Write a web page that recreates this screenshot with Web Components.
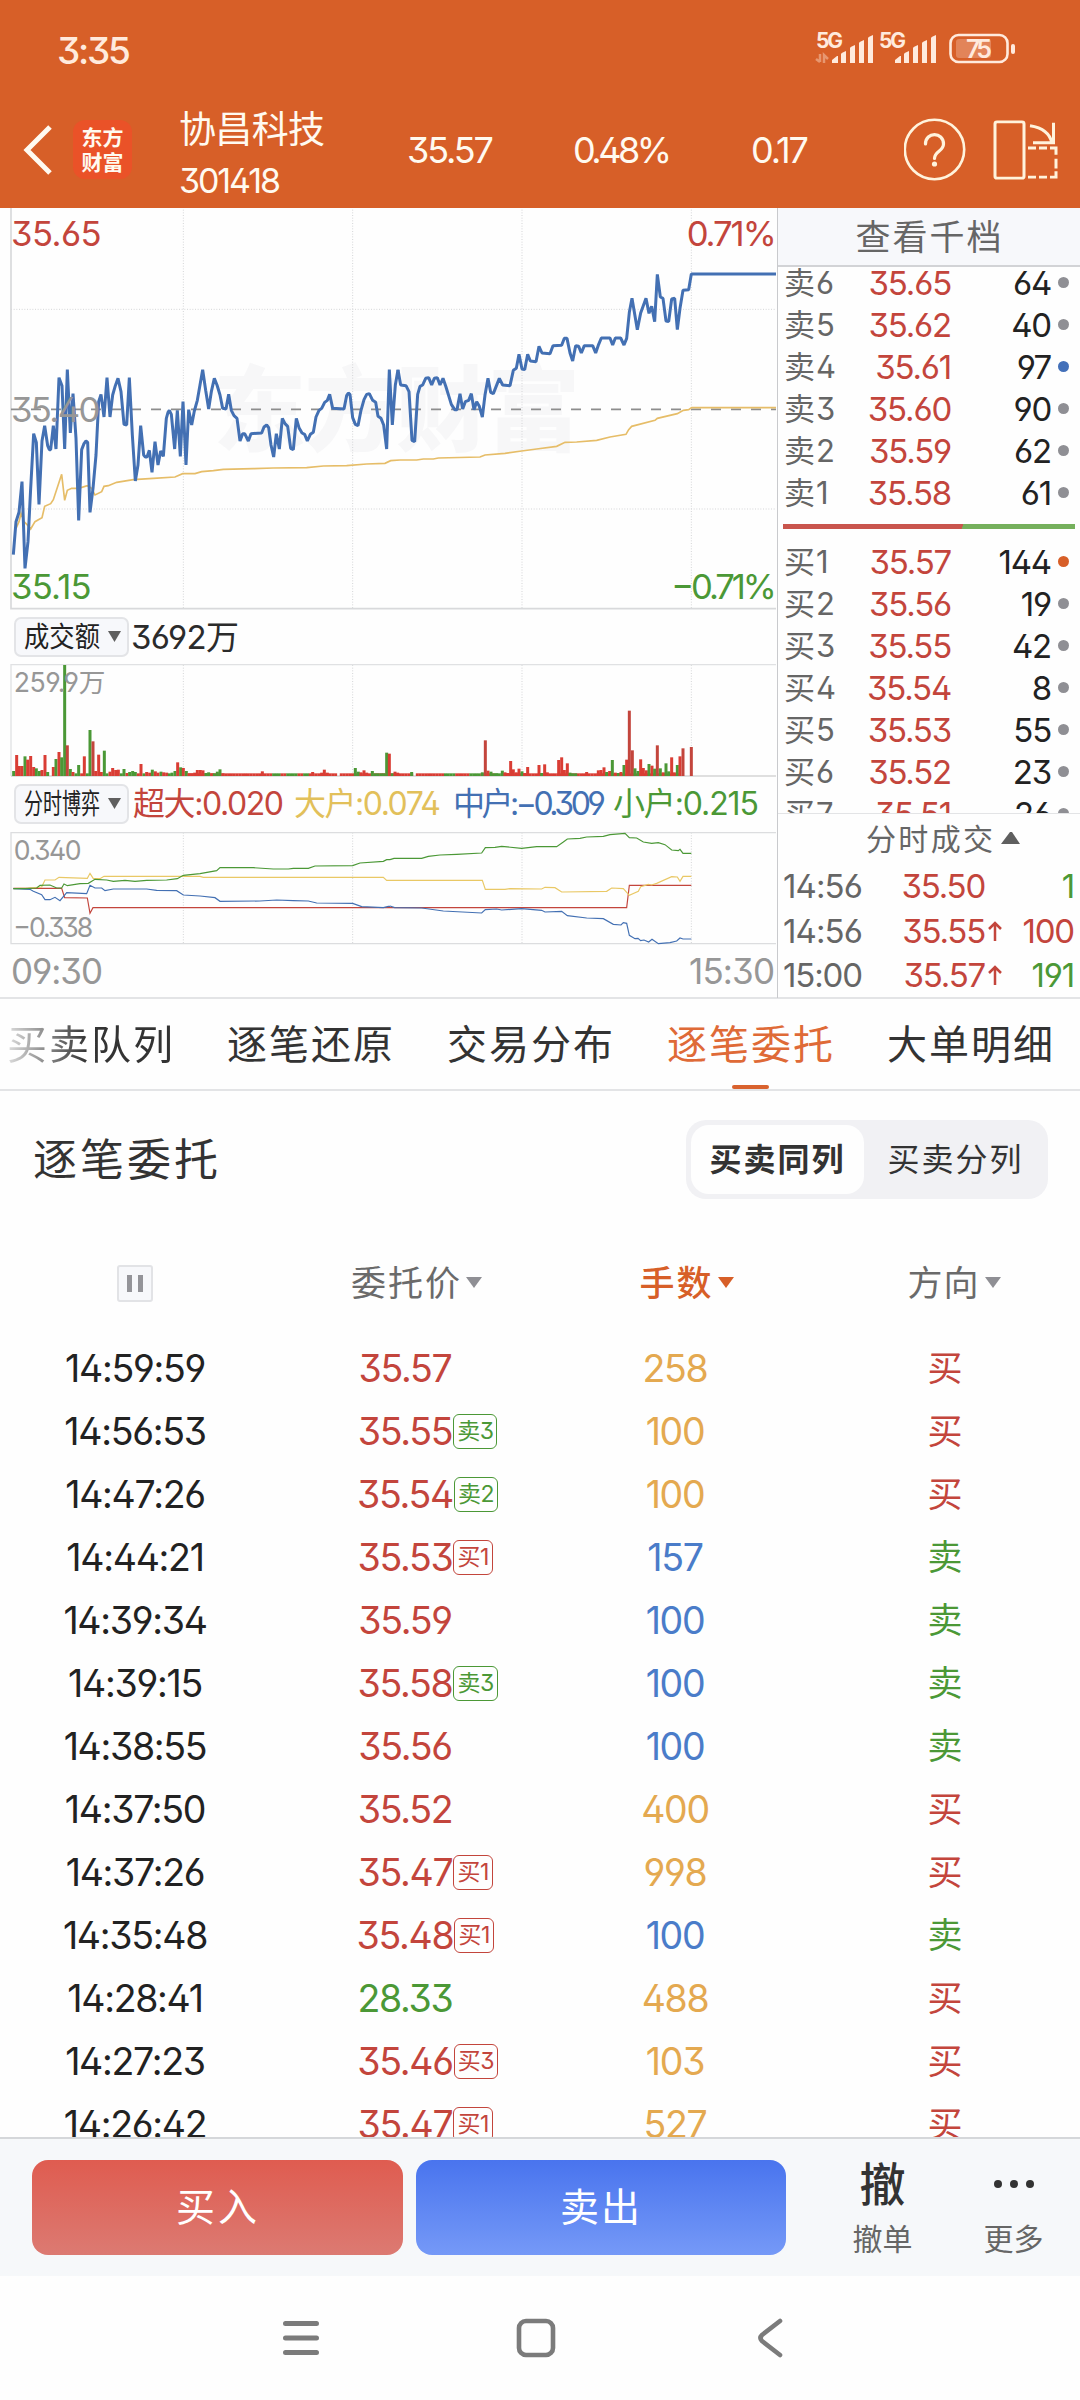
<!DOCTYPE html>
<html lang="zh-CN">
<head>
<meta charset="utf-8">
<title>协昌科技 301418</title>
<style>
    html, body { margin: 0; padding: 0; }

    body {
        width: 1080px;
        height: 2400px;
        overflow: hidden;
        background: #fefefe;
        color: #222;
        font-family: Inter, "Noto Sans CJK SC", sans-serif;
        font-feature-settings: "cv09", "ss01";
        --red: #c3453c;
        --green: #4b9836;
        --blue: #4370b3;
        --orange: #d75f28;
        --line: #e3e4e6;
    }
</style>
</head>
<body>
<trade-app></trade-app>

<script>
// Tracks its text in or out so that it fills the given width
class FitText extends HTMLElement {
    constructor() {
        super();
        this.attachShadow({ mode: 'open' });
        this.shadowRoot.innerHTML = `
        <style>
            :host { display: inline-block; white-space: nowrap; }
            span { display: inline-block; letter-spacing: 0; }
        </style>
        <span><slot></slot></span>`;
    }

    connectedCallback() {
        const span = this.shadowRoot.querySelector('span');
        const count = this.textContent.length;
        const natural = span.getBoundingClientRect().width;
        const width = Number(this.getAttribute('w'));
        const gap = (width - natural) / (count - 1);
        span.style.letterSpacing = gap + 'px';
        span.style.marginRight = -gap + 'px';
    }
}

class StatusBar extends HTMLElement {
    constructor() {
        super();
        this.attachShadow({ mode: 'open' });
        const bars = `
            <path d="M17 31V28l5-4h1v7zM26 31V22q0-1 5-3v12zM35 31V16q0-1 5-3v18zM44 31V11q0-1 5-3v23zM53 31V6q0-1 5-3v28z"/>`;
        this.shadowRoot.innerHTML = `
        <style>
            :host {
                display: flex;
                justify-content: space-between;
                align-items: center;
                height: 100px;
                padding: 0 63px 0 57px;
                box-sizing: border-box;
                color: #ffeadd;
                font-size: 37px;
                font-weight: 500;
            }
            svg { display: block; overflow: visible; }
            text { font-family: Inter, sans-serif; }
        </style>
        <fit-text w="74">3:35</fit-text>
        <svg width="202" height="36" viewBox="0 0 202 36" fill="#ffeadd">
            <text x="1" y="16" font-size="21" font-weight="700" textLength="27">5G</text>
            <path d="M5 22v8M5 30l-4-3M9 31v-8l4 4" stroke="#ffeadd" stroke-width="2.5" fill="none" opacity=".4"/>
            ${bars}
            <text x="64" y="16" font-size="21" font-weight="700" textLength="27">5G</text>
            <g transform="translate(63 0)">${bars}</g>
            <rect x="135.500" y="3" width="57" height="27" rx="8" fill="none" stroke="#ffeadd" stroke-width="2.600"/>
            <rect x="141" y="7" width="35" height="19" rx="3" opacity=".27"/>
            <rect x="196" y="12" width="4" height="10" rx="2"/>
            <text x="151" y="25.500" font-size="25" font-weight="600" textLength="26">75</text>
        </svg>`;
    }
}

class StockHeader extends HTMLElement {
    constructor() {
        super();
        this.attachShadow({ mode: 'open' });
        this.shadowRoot.innerHTML = `
        <style>
            :host {
                display: grid;
                grid-template-columns: 73px 106px 228px 166px 178px 153px 1fr;
                grid-template-rows: 99px;
                align-items: center;
                height: 108px;
                color: #fffaf0;
                font-size: 36px;
                line-height: 44px;
            }
            .back { margin-left: 22px; }
            .logo {
                width: 59px;
                height: 59px;
                border-radius: 12px;
                background: #ea5228;
                text-align: center;
                font: 700 21px/25px "Noto Sans CJK SC", sans-serif;
                padding-top: 4px;
                box-sizing: border-box;
            }
            .name { padding-top: 11px; font-size: 37px; line-height: 50px; }
            .name > * { display: block; }
            .name .code { font-size: 34px; line-height: 51px; }
            svg { display: block; }
            .icons { display: flex; gap: 26px; }
        </style>
        <svg class="back" width="32" height="54" viewBox="0 0 32 54" fill="none" stroke="#fffaf0" stroke-width="5"><path d="M28 4L5 27l23 23"/></svg>
        <div class="logo">东方<br>财富</div>
        <div class="name"><fit-text w="146">协昌科技</fit-text><fit-text class="code" w="102">301418</fit-text></div>
        <fit-text w="87">35.57</fit-text>
        <fit-text w="99">0.48%</fit-text>
        <fit-text w="58">0.17</fit-text>
        <div class="icons">
            <svg width="62" height="64" viewBox="0 0 62 64" fill="none" stroke="#fff3dc" stroke-width="2.600">
                <circle cx="30.500" cy="31.500" r="29.700"/>
                <path d="M21.500 26c0-12.500 18-12.500 18 0 0 7.500-9 7-9 14.500" stroke-width="3.200" stroke-linecap="round"/>
                <circle cx="30.500" cy="46" r="2.600" fill="#fff3dc" stroke="none"/>
            </svg>
            <svg width="66" height="64" viewBox="0 0 66 66" preserveAspectRatio="none" fill="none" stroke="#fff3dc" stroke-width="3">
                <rect x="3" y="4" width="29" height="58" rx="2"/>
                <path d="M38 8q19 3 22 18M61.500 5v20.500H41"/>
                <path d="M36 31h8M47 31h8M58 31h6v7M64 42v10M64 55v6h-6M55 61h-8M44 61h-8"/>
            </svg>
        </div>`;
    }
}

const UP = '#c3453c';
const DOWN = '#4b9836';

// Charts are plotted at three units to the pixel
class PriceChart extends HTMLElement {
    constructor() {
        super();
        this.attachShadow({ mode: 'open' });
        this.shadowRoot.innerHTML = `
        <style>
            :host { display: block; }
            svg { display: block; overflow: visible; }
            text { font-family: Inter, "Noto Sans CJK SC", sans-serif; font-size: 104px; }
            .mark { font-family: "Noto Sans CJK SC", sans-serif; font-size: 278px; font-weight: 900; fill: #f7f7f8; }
        </style>
        <svg width="777" height="405" viewBox="0 9 2331 1215" fill="none">
            <text class="mark" x="640" y="716" textLength="1100">东方财富</text>
            <path d="M33 313H2328M33 912H2328M550 14V1211M1058 14V1211M1566 14V1211M2074 14V1211" stroke="#d4d5d7" stroke-width="3" stroke-dasharray="3 5"/>
            <path d="M33 9V1211H2328" stroke="#d8d9db" stroke-width="5"/>
            <path d="M33 613H2328" stroke="#8d8d8d" stroke-width="5" stroke-dasharray="30 30"/>
            <g stroke="#e6bd68" stroke-width="5">
                <polyline points="48,970 57,950 63,925 72,950 84,962 92,972 105,950 126,938 134,904 152,896 160,884 185,808 194,886 202,856 215,850 236,850 262,842 275,850 285,870 305,860 312,844 325,842 350,832 400,824 460,820 525,816 548,806 585,806 605,800 640,797 670,793 760,791 820,789 920,788 970,783 1040,782 1100,777 1155,775 1172,767 1200,765"/>
                <polyline transform="translate(1170 0)" points="30,765 80,765 100,762 130,762 145,759 270,756 285,750 345,745 395,738 440,732 500,724 525,712 560,711 620,706 660,696 708,688 716,674 725,664 795,646 802,640 862,626 880,616 896,614 905,608 1158,608"/>
            </g>
            <g stroke="#4370b3" stroke-width="9" stroke-linejoin="bevel">
                <polyline points="40,1049 48,950 57,922 66,830 75,1090 84,1010 92,850 101,686 109,712 117,898 126,708 134,662 143,722 148,734 152,734 160,662 168,732 177,518 186,542 194,732 202,494 211,684 219,566 228,700 236,946 245,734 252,716 258,708 263,712 270,922 279,850 288,750 296,590 303,568 312,636 321,518 330,636 338,570 346,542 354,520 363,560 372,658 380,660 388,518 397,690 406,828 414,780 422,662 431,750 436,756 441,756 448,736 456,802 465,710 474,780 482,738 490,754 499,640 504,622 508,616 514,628 524,732 532,616 541,754 549,590 558,780 566,614 575,660 583,618 592,586 600,540 608,494 617,556 626,612 634,560 643,520 651,540 660,570 668,610 678,612 686,568 694,616 702,632 711,640 720,708 728,686 734,686 745,708 753,686 785,684 792,666 800,660 806,668 813,720 821,756 829,686 838,732 847,640 855,656 863,664 872,730 880,734 889,640 897,668 906,684 914,688 922,708 931,688 940,682 948,636 957,616 965,610 974,592 982,586 989,568 998,610 1032,612 1040,572 1045,564 1050,568 1058,638 1066,658 1074,662 1083,616 1092,584 1100,568 1108,566 1118,586 1127,592 1134,634 1143,640 1151,660 1160,732 1168,494 1177,660 1186,540 1194,494"/>
                <polyline transform="translate(1170 0)" points="24,494 32,540 48,542 57,560 66,706 74,710 83,568 90,544 98,540 107,520 116,518 125,540 133,520 142,518 150,540 159,520 168,546 176,572 184,598 194,614 201,614 210,566 218,612 226,590 236,586 244,566 252,614 260,590 268,604 277,636 285,570 294,520 302,562 310,566 328,520 338,540 360,542 370,496 379,490 387,448 396,492 404,494 413,448 421,468 438,470 447,424 456,444 480,446 489,422 515,421 523,400 531,400 540,444 548,468 557,422 566,424 574,444 583,422 608,422 617,444 626,418 634,399 660,399 668,420 676,399 692,399 702,420 710,400 718,322 726,280 742,374 752,324 768,280 777,325 785,304 794,350 802,208 811,276 819,280 828,348 836,350 845,282 854,280 862,374 870,310 879,256 896,254 904,207 1158,207"/>
            </g>
            <text x="33" y="123" fill="${UP}" textLength="272">35.65</text>
            <text x="33" y="651" fill="#979797" textLength="268">35.40</text>
            <text x="33" y="1182" fill="${DOWN}" textLength="242">35.15</text>
            <text x="2060" y="123" fill="${UP}" textLength="270">0.71%</text>
            <text x="2014" y="1182" fill="${DOWN}" textLength="316">−0.71%</text>
        </svg>`;
    }
}

const VOLUME = `41:498g 50:450r 58:483r 66:483r 75:454g 83:464r 92:453r 101:486r 109:490g 118:498g 126:495r 135:450r 143:501g
160:486r 168:462g 177:441r 185:457g 194:180g 202:421r 211:492g 219:501r 228:505g 236:480g 245:505r 253:454r 262:505g 270:375g
279:409r 287:498r 296:449r 304:501r 313:437g 321:505g 330:500r 338:489r 347:495r 355:494r 364:505g 372:492g 381:504r 389:501g
398:498g 406:501g 415:505r 423:477r 432:505g 440:501r 449:503r 457:494g 466:499r 474:503r 483:500g 491:502r 500:503r 508:505g
516:503g 525:498g 533:472r 542:487g 550:489r 559:498g 567:505r 575:505r 584:503r 592:495r 601:495r 609:496r 618:504g 626:502g
635:505r 643:505g 652:500g 660:493g 669:505r 787:499r 938:501r 965:503r 973:494r 982:503r 1066:489g 1075:500g 1083:502r 1092:496r
1100:503r 1117:498g 1126:505g 1134:505g 1143:505g 1151:505g 1160:443g 1168:446r 1177:505g 1185:500r 1193:503r 1235:501g
1447:502g 1456:406r 1464:497r 1473:500g 1481:505g 1490:505g 1507:497g 1515:502r 1523:504r 1532:468r 1540:493r 1549:502r 1557:491r
1566:499g 1574:504r 1583:486r 1617:480r 1625:504g 1634:478r 1642:502r 1676:465r 1685:457r 1693:495r 1702:475r 1710:503g
1718:505g 1727:505g 1760:501r 1795:496r 1803:495r 1812:487r 1820:501g 1829:498r 1837:465g 1846:503r 1855:504g 1863:501r 1872:480g
1880:464r 1888:317r 1897:436r 1905:490g 1914:498g 1922:463r 1930:489r 1939:496r 1947:477g 1956:482r 1964:491g 1972:421r
1981:490g 1990:502r 1998:475g 2006:499g 2015:457r 2023:502r 2032:480g 2040:454r 2049:430r 2074:426r`;

class VolumeChart extends HTMLElement {
    constructor() {
        super();
        this.attachShadow({ mode: 'open' });
        let bars = '';
        // quiet minutes along the baseline
        for (let x = 567; x < 2040; x += 8.45) {
            if (Math.abs(x - 1014) < 5 || Math.abs(x - 1242) < 5) continue;
            const down = (x > 810 && x < 925 && x % 3 < 2) || (x > 1330 && x < 1365) || (x > 1410 && x < 1445) || (x > 1480 && x < 1505);
            bars += `<rect x="${x - 4}" y="505" width="9" height="8" fill="${down ? DOWN : '#d93d34'}"/>`;
        }
        for (const item of VOLUME.split(/\s+/)) {
            const [x, rest] = item.split(':');
            const top = parseInt(rest);
            const fill = rest.endsWith('g') ? DOWN : (top < 440 ? UP : '#d93d34');
            bars += `<rect x="${x - 4.5}" y="${top}" width="9" height="${513 - top}" fill="${fill}"/>`;
        }
        this.shadowRoot.innerHTML = `
        <style>
            :host { display: block; }
            svg { display: block; overflow: visible; }
            text { font-family: Inter, "Noto Sans CJK SC", sans-serif; font-size: 80px; }
        </style>
        <svg width="777" height="120" viewBox="0 165 2331 360" fill="none">
            <path d="M550 180V513M1058 180V513M1566 180V513M2074 180V513" stroke="#d4d5d7" stroke-width="3" stroke-dasharray="3 5"/>
            <path d="M33 513V179H2328" stroke="#e0e1e3" stroke-width="4"/>
            <path d="M33 513H2328" stroke="#d5d5d5" stroke-width="4"/>
            ${bars}
            <text x="41" y="261" fill="#979797" textLength="275">259.9万</text>
        </svg>`;
    }
}

class GameChart extends HTMLElement {
    constructor() {
        super();
        this.attachShadow({ mode: 'open' });
        this.shadowRoot.innerHTML = `
        <style>
            :host { display: block; }
            svg { display: block; overflow: visible; }
            text { font-family: Inter, sans-serif; font-size: 80px; }
        </style>
        <svg width="777" height="120" viewBox="0 666 2331 360" fill="none">
            <path d="M550 680V1013M1058 680V1013M1566 680V1013M2074 680V1013" stroke="#d4d5d7" stroke-width="3" stroke-dasharray="3 5"/>
            <path d="M2328 680H33V1013H2328" stroke="#dcdddf" stroke-width="4"/>
            <g stroke-width="3.500">
                <polyline stroke="#c3453c" points="40,847 185,847 194,875 262,876 270,922 279,905 1880,905 1888,838 2074,838"/>
                <polyline stroke="#e9c865" points="40,848 85,846 125,843 135,822 165,822 177,814 262,817 270,802 280,818 300,818 312,811 600,811 610,814 1150,814 1160,823 1170,823"/>
                <polyline stroke="#e9c865" transform="translate(1170 0)" points="0,823 277,823 286,850 345,850 360,848 455,849 465,844 495,845 515,858 650,856 665,846 700,848 718,868 745,856 752,842 775,835 785,837 800,832 845,812 862,813 870,826 879,811 904,811"/>
                <polyline stroke="#4370b3" points="40,848 90,850 100,856 125,866 135,881 150,881 165,874 180,884 200,860 260,863 270,838 285,846 305,846 315,854 340,849 440,849 470,853 530,854 550,867 600,870 645,875 660,886 780,885 830,882 880,884 925,885 950,891 1058,892 1085,902 1150,905 1165,901 1170,901"/>
                <polyline stroke="#4370b3" transform="translate(1170 0)" points="0,900 14,905 95,906 160,915 275,921 286,911 320,909 335,912 395,908 455,913 465,918 515,916 532,929 590,936 640,938 670,955 693,957 700,950 710,952 718,988 735,998 744,997 752,1004 762,1002 776,1008 786,1000 805,1013 840,1010 860,1005 870,996 879,999 904,999"/>
                <polyline stroke="#4b9836" points="40,848 75,848 110,846 120,838 150,837 170,846 185,846 192,834 202,839 240,833 265,832 285,820 320,822 340,826 375,823 405,826 440,823 500,822 532,818 550,808 600,803 650,794 660,785 760,785 820,789 865,789 880,787 925,787 945,780 1058,779 1080,771 1150,766 1160,761 1170,761"/>
                <polyline stroke="#4b9836" transform="translate(1170 0)" points="0,761 12,757 95,757 115,751 150,747 200,745 275,741 286,725 315,724 335,721 395,727 440,722 500,722 520,708 532,699 570,697 590,693 640,691 660,686 705,682 718,695 740,696 760,708 785,712 805,710 825,716 845,732 865,734 870,730 879,742 904,742"/>
            </g>
            <text x="41" y="762" fill="#979797" textLength="204">0.340</text>
            <text x="40" y="992" fill="#979797" textLength="240">−0.338</text>
        </svg>`;
    }
}

// Picker chip; its label is condensed into a fixed width
class IndexPicker extends HTMLElement {
    constructor() {
        super();
        this.attachShadow({ mode: 'open' });
        this.shadowRoot.innerHTML = `
        <style>
            :host {
                display: flex;
                align-items: center;
                width: 115px;
                height: 40px;
                box-sizing: border-box;
                padding-left: 8px;
                gap: 7px;
                border: 2px solid #e3e4e7;
                border-radius: 7px;
                background: #f7f8fb;
            }
            svg { overflow: visible; }
            text { font: 28px "Noto Sans CJK SC", sans-serif; fill: #222; }
        </style>
        <svg width="77" height="38" viewBox="0 0 77 38"><text x="0" y="28.500" textLength="76" lengthAdjust="spacingAndGlyphs">${this.getAttribute('label')}</text></svg>
        <svg width="13" height="12" viewBox="0 0 13 12"><path d="M0 0h13L6.500 11z" fill="#5f5f5f"/></svg>`;
    }
}

class ChartPanel extends HTMLElement {
    constructor() {
        super();
        this.attachShadow({ mode: 'open' });
        this.shadowRoot.innerHTML = `
        <style>
            :host { display: block; width: 777px; height: 790px; }
            .row {
                display: flex;
                align-items: center;
                height: 47px;
                padding-left: 14px;
                font-size: 33px;
                line-height: 40px;
            }
            .second { height: 48px; font-size: 32px; }
            .amount { margin-left: 2px; color: #2b2b2b; }
            .axis {
                display: flex;
                justify-content: space-between;
                padding: 1px 2px 0 11px;
                font-size: 35px;
                line-height: 44px;
                color: #979797;
            }
        </style>
        <price-chart></price-chart>
        <div class="row"><index-picker label="成交额"></index-picker><fit-text class="amount" w="108">3692万</fit-text></div>
        <volume-chart></volume-chart>
        <div class="row second">
            <index-picker label="分时博弈"></index-picker>
            <fit-text w="151" style="color:var(--red);margin-left:4px">超大:0.020</fit-text>
            <fit-text w="147" style="color:#e2c05a;margin-left:10px">大户:0.074</fit-text>
            <fit-text w="153" style="color:var(--blue);margin-left:12px">中户:−0.309</fit-text>
            <fit-text w="146" style="color:var(--green);margin-left:7px">小户:0.215</fit-text>
        </div>
        <game-chart></game-chart>
        <div class="axis"><fit-text w="92">09:30</fit-text><fit-text w="86">15:30</fit-text></div>`;
    }
}

class BookRow extends HTMLElement {
    constructor() {
        super();
        this.attachShadow({ mode: 'open' });
        const dot = this.getAttribute('dot') || '#8f8f94';
        this.shadowRoot.innerHTML = `
        <style>
            :host {
                display: grid;
                grid-template-columns: 52px 1fr 100px 12px;
                align-items: center;
                height: 42px;
                padding: 0 17px 0 6px;
                font-size: 33px;
                line-height: 42px;
                letter-spacing: -1.200px;
            }
            .side { color: #666; font-size: 31px; letter-spacing: 1px; white-space: nowrap; }
            .price { color: var(--red); text-align: right; }
            .lots { text-align: right; }
            i { width: 11px; height: 11px; border-radius: 50%; background: ${dot}; margin-left: 7px; margin-top: -2px; }
        </style>
        <span class="side">${this.getAttribute('side')}</span>
        <span class="price">${this.getAttribute('price')}</span>
        <span class="lots">${this.getAttribute('lots')}</span>
        <i></i>`;
    }
}

class TradeTick extends HTMLElement {
    constructor() {
        super();
        this.attachShadow({ mode: 'open' });
        const arrow = this.hasAttribute('up')
            ? '<svg width="14" height="20" viewBox="0 0 14 20" fill="none" stroke="#c3453c" stroke-width="2.500"><path d="M7 20V2M1 8l6-6 6 6"/></svg>'
            : '';
        this.shadowRoot.innerHTML = `
        <style>
            :host {
                display: grid;
                grid-template-columns: 80px 122px 23px 1fr;
                align-items: center;
                height: 44.500px;
                padding: 0 6px 0 5px;
                font-size: 33px;
                letter-spacing: -1.200px;
            }
            .time { color: #666; }
            .price { color: var(--red); text-align: right; }
            .lots { color: ${this.getAttribute('color')}; text-align: right; }
            svg { display: block; margin-left: 3px; }
        </style>
        <fit-text class="time" w="80">${this.getAttribute('time')}</fit-text>
        <span class="price">${this.getAttribute('price')}</span>
        <span>${arrow}</span>
        <span class="lots">${this.getAttribute('lots')}</span>`;
    }
}

class OrderBook extends HTMLElement {
    constructor() {
        super();
        this.attachShadow({ mode: 'open' });
        this.shadowRoot.innerHTML = `
        <style>
            :host {
                display: block;
                width: 303px;
                height: 790px;
                box-sizing: border-box;
                border-left: 1.500px solid #c9cacd;
            }
            .head {
                height: 59px;
                box-sizing: border-box;
                background: #f7f8fb;
                border-bottom: 2px solid #d2d3d6;
                text-align: center;
                padding-right: 1px;
                font-size: 35px;
                line-height: 59px;
                color: #666;
            }
            .levels { height: 551px; overflow: hidden; border-bottom: 1px solid var(--line); margin-top: -5px; }
            .ratio {
                height: 5px;
                margin: 10px 5px 12px;
                background: linear-gradient(110deg, #c9554d 61.300%, #75b05c 61.500%);
            }
            .deals {
                display: flex;
                justify-content: center;
                align-items: center;
                gap: 8px;
                height: 50px;
                padding-left: 28px;
                line-height: 40px;
                padding-bottom: 1px;
                box-sizing: border-box;
                font-size: 30px;
                color: #666;
            }
        </style>
        <div class="head"><fit-text w="146">查看千档</fit-text></div>
        <div class="levels">
            <book-row side="卖6" price="35.65" lots="64"></book-row>
            <book-row side="卖5" price="35.62" lots="40"></book-row>
            <book-row side="卖4" price="35.61" lots="97" dot="#4370b9"></book-row>
            <book-row side="卖3" price="35.60" lots="90"></book-row>
            <book-row side="卖2" price="35.59" lots="62"></book-row>
            <book-row side="卖1" price="35.58" lots="61"></book-row>
            <div class="ratio"></div>
            <book-row side="买1" price="35.57" lots="144" dot="#d75f28"></book-row>
            <book-row side="买2" price="35.56" lots="19"></book-row>
            <book-row side="买3" price="35.55" lots="42"></book-row>
            <book-row side="买4" price="35.54" lots="8"></book-row>
            <book-row side="买5" price="35.53" lots="55"></book-row>
            <book-row side="买6" price="35.52" lots="23"></book-row>
            <book-row side="买7" price="35.51" lots="26"></book-row>
        </div>
        <div class="deals"><fit-text w="127">分时成交</fit-text><svg width="19" height="13" viewBox="0 0 19 13"><path d="M0 12L9 0q1-1 2 0l8 12z" fill="#5f5f5f"/></svg></div>
        <trade-tick time="14:56" price="35.50" lots="1" color="var(--green)"></trade-tick>
        <trade-tick time="14:56" price="35.55" lots="100" color="var(--red)" up></trade-tick>
        <trade-tick time="15:00" price="35.57" lots="191" color="var(--green)" up></trade-tick>`;
    }
}

class TabStrip extends HTMLElement {
    constructor() {
        super();
        this.attachShadow({ mode: 'open' });
        this.shadowRoot.innerHTML = `
        <style>
            :host {
                display: flex;
                gap: 54px;
                height: 94px;
                box-sizing: border-box;
                padding-left: 7px;
                border-top: 2px solid var(--line);
                border-bottom: 2px solid var(--line);
                font-size: 40px;
                line-height: 92px;
                color: #333;
            }
            div { display: flex; flex-direction: column; align-items: center; height: 90px; }
            fit-text { height: 85px; }
            .faded { background: linear-gradient(90deg, #ddd, #333 80px); -webkit-background-clip: text; color: transparent; }
            .on { color: #df6a37; }
            .on i { width: 37px; height: 5px; border-radius: 3px; background: #d9622e; margin-top: 1px; }
        </style>
        <div class="faded"><fit-text w="166">买卖队列</fit-text></div>
        <div><fit-text w="166">逐笔还原</fit-text></div>
        <div><fit-text w="166">交易分布</fit-text></div>
        <div class="on"><fit-text w="166">逐笔委托</fit-text><i></i></div>
        <div><fit-text w="166">大单明细</fit-text></div>`;
    }
}

class SectionHead extends HTMLElement {
    constructor() {
        super();
        this.attachShadow({ mode: 'open' });
        this.shadowRoot.innerHTML = `
        <style>
            :host {
                display: flex;
                justify-content: space-between;
                align-items: center;
                height: 79px;
                padding: 29px 32px 0 33px;
                font-size: 44px;
                line-height: 60px;
                color: #333;
            }
            .switch {
                display: flex;
                width: 362px;
                height: 79px;
                box-sizing: border-box;
                padding: 5px;
                border-radius: 20px;
                background: #f1f1f4;
                font-size: 32px;
            }
            .switch > * { flex: 1; display: flex; justify-content: center; align-items: center; padding-left: 2px; }
            .switch .on { flex: 0 0 173px; padding: 0 2px 0 0; box-sizing: border-box; border-radius: 18px; background: #fefefe; font-weight: 700; }
        </style>
        <fit-text w="185">逐笔委托</fit-text>
        <div class="switch"><span class="on"><fit-text w="134">买卖同列</fit-text></span><span><fit-text w="134">买卖分列</fit-text></span></div>`;
    }
}

class OrderRow extends HTMLElement {
    constructor() {
        super();
        this.attachShadow({ mode: 'open' });
        const [time, price, tag, lots, side] = this.getAttribute('data').split(',');
        const big = ['258', '100', '400', '998', '488', '103', '527'].includes(lots) && side === '买';
        const tagHtml = tag ? `<b class="${tag[0] === '买' ? 'buy' : 'sell'}">${tag}</b>` : '<b hidden></b>';
        this.shadowRoot.innerHTML = `
        <style>
            :host {
                display: grid;
                grid-template-columns: repeat(4, 270px);
                align-items: center;
                justify-items: center;
                height: 63px;
                font-size: 37.500px;
                line-height: 63px;
                letter-spacing: -1.300px;
            }
            .price {
                display: grid;
                grid-template-columns: 1fr auto 1fr;
                align-items: center;
                width: 270px;
                color: ${price === '28.33' ? 'var(--green)' : 'var(--red)'};
            }
            .price span { grid-column: 2; }
            b {
                justify-self: start;
                box-sizing: border-box;
                height: 35px;
                margin-left: 1px;
                padding: 0 3px;
                border: 1.500px solid;
                border-radius: 6px;
                font-size: 23px;
                font-weight: 400;
                line-height: 32px;
                letter-spacing: -.5px;
            }
            b[hidden] { display: none; }
            .buy { color: var(--red); }
            .sell { color: var(--green); }
            .lots { color: ${big ? '#e4a950' : '#4a7cc9'}; }
            .side { font-size: 35px; letter-spacing: 0; color: ${side === '买' ? 'var(--red)' : 'var(--green)'}; }
        </style>
        <span>${time}</span>
        <span class="price"><span>${price}</span>${tagHtml}</span>
        <span class="lots">${lots}</span>
        <span class="side">${side}</span>`;
    }
}

class OrderList extends HTMLElement {
    constructor() {
        super();
        this.attachShadow({ mode: 'open' });
        const rows = [
            '14:59:59,35.57,,258,买',
            '14:56:53,35.55,卖3,100,买',
            '14:47:26,35.54,卖2,100,买',
            '14:44:21,35.53,买1,157,卖',
            '14:39:34,35.59,,100,卖',
            '14:39:15,35.58,卖3,100,卖',
            '14:38:55,35.56,,100,卖',
            '14:37:50,35.52,,400,买',
            '14:37:26,35.47,买1,998,买',
            '14:35:48,35.48,买1,100,卖',
            '14:28:41,28.33,,488,买',
            '14:27:23,35.46,买3,103,买',
            '14:26:42,35.47,买1,527,买',
        ];
        const tri = c => `<svg width="16" height="12" viewBox="0 0 16 12"><path d="M0 0h16L8 11z" fill="${c}"/></svg>`;
        this.shadowRoot.innerHTML = `
        <style>
            :host { display: block; height: 938px; overflow: hidden; }
            .head {
                display: grid;
                grid-template-columns: repeat(4, 270px);
                height: 138px;
                padding-top: 30px;
                box-sizing: border-box;
                align-items: center;
                justify-items: center;
                font-size: 35px;
                line-height: 46px;
                color: #6a6a6a;
            }
            .head span { display: flex; align-items: center; gap: 6px; padding-left: 23px; }
            .head .hot { color: var(--orange); font-weight: 500; }
            .head .last { padding-left: 18px; }
            .pause {
                display: flex;
                justify-content: center;
                align-items: center;
                gap: 6px;
                width: 36px;
                height: 37px;
                box-sizing: border-box;
                border: 2px solid #e2e3e6;
                border-radius: 3px;
                background: #f7f8fb;
            }
            .pause i { width: 5px; height: 17px; background: #949499; }
        </style>
        <div class="head">
            <div class="pause"><i></i><i></i></div>
            <span><fit-text w="109">委托价</fit-text>${tri('#8f8f94')}</span>
            <span class="hot"><fit-text w="72">手数</fit-text>${tri('#d75f28')}</span>
            <span class="last"><fit-text w="71">方向</fit-text>${tri('#8f8f94')}</span>
        </div>
        ${rows.map(r => `<order-row data="${r}"></order-row>`).join('')}`;
    }
}

class ActionBar extends HTMLElement {
    constructor() {
        super();
        this.attachShadow({ mode: 'open' });
        this.shadowRoot.innerHTML = `
        <style>
            :host {
                display: flex;
                height: 139px;
                box-sizing: border-box;
                padding: 21px 0 0 32px;
                border-top: 2px solid #d5d7da;
                background: #f6f8fa;
            }
            button {
                width: 371px;
                height: 95px;
                margin: 0 13px 0 0;
                padding: 0 2px 7px 0;
                border: 0;
                border-radius: 16px;
                background: linear-gradient(#df5c50, #dc7a72);
                color: #fff;
                font: inherit;
                font-size: 39px;
            }
            .sell { width: 370px; background: linear-gradient(#4974ee, #7599f7); margin-right: 31px; }
            .item { display: flex; flex-direction: column; align-items: center; width: 131px; font-size: 30px; line-height: 42px; color: #666; }
            .item b { height: 58px; font-size: 46px; line-height: 48px; font-weight: 500; color: #333; }
            .item svg { display: block; height: 58px; }
        </style>
        <button><fit-text w="81">买入</fit-text></button>
        <button class="sell"><fit-text w="80">卖出</fit-text></button>
        <div class="item"><b>撤</b><span>撤单</span></div>
        <div class="item"><svg width="42" height="58" viewBox="0 0 42 58" fill="#333"><circle cx="5" cy="24" r="4"/><circle cx="21" cy="24" r="4"/><circle cx="37" cy="24" r="4"/></svg><span>更多</span></div>`;
    }
}

class NavKeys extends HTMLElement {
    constructor() {
        super();
        this.attachShadow({ mode: 'open' });
        this.shadowRoot.innerHTML = `
        <style>
            :host { display: flex; align-items: center; gap: 194px; height: 123px; padding-left: 281px; }
        </style>
        <svg width="40" height="44" viewBox="0 0 40 44" stroke="#7b7b7b" stroke-width="5" stroke-linecap="round"><path d="M4.500 7.500h31M4.500 22h31M4.500 36.500h31"/></svg>
        <svg width="42" height="44" viewBox="0 0 42 44" fill="none" stroke="#7b7b7b" stroke-width="4.600"><rect x="4" y="5" width="34" height="34" rx="7"/></svg>
        <svg width="40" height="44" viewBox="0 0 40 44" fill="none" stroke="#7b7b7b" stroke-width="4.600" stroke-linecap="round" stroke-linejoin="round"><path d="M29 5L11 19q-3 3 0 6l18 14"/></svg>`;
    }
}

class TradeApp extends HTMLElement {
    constructor() {
        super();
        this.attachShadow({ mode: 'open' });
        this.shadowRoot.innerHTML = `
        <style>
            :host { display: block; }
            header { height: 208px; background: var(--orange); }
            .quote { display: flex; height: 789px; }
        </style>
        <header><status-bar></status-bar><stock-header></stock-header></header>
        <div class="quote"><chart-panel></chart-panel><order-book></order-book></div>
        <tab-strip></tab-strip>
        <section-head></section-head>
        <order-list></order-list>
        <action-bar></action-bar>
        <nav-keys></nav-keys>`;
    }
}

customElements.define('fit-text', FitText);
customElements.define('status-bar', StatusBar);
customElements.define('stock-header', StockHeader);
customElements.define('price-chart', PriceChart);
customElements.define('volume-chart', VolumeChart);
customElements.define('game-chart', GameChart);
customElements.define('index-picker', IndexPicker);
customElements.define('chart-panel', ChartPanel);
customElements.define('book-row', BookRow);
customElements.define('trade-tick', TradeTick);
customElements.define('order-book', OrderBook);
customElements.define('tab-strip', TabStrip);
customElements.define('section-head', SectionHead);
customElements.define('order-row', OrderRow);
customElements.define('order-list', OrderList);
customElements.define('action-bar', ActionBar);
customElements.define('nav-keys', NavKeys);
customElements.define('trade-app', TradeApp);
</script>
</body>
</html>
